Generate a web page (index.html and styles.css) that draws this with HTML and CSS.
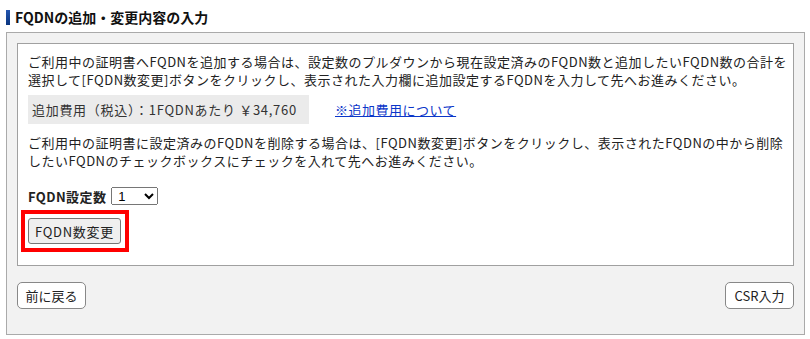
FILE: index.html
```html
<html>
    <head>
        <meta http-equiv="Content-Type" content="text/html; charset=utf-8" />
        <title>FQDNの追加・変更内容の入力</title>
        <link rel="stylesheet" href="styles.css">
    </head>
    <body>
        <h2 class="ttl">FQDNの追加・変更内容の入力</h2>
        <div class="panel">
            <div class="box">
                <p class="txt">ご利用中の証明書へFQDNを追加する場合は、設定数のプルダウンから現在設定済みのFQDN数と追加したいFQDN数の合計を<br />選択して[FQDN数変更]ボタンをクリックし、表示された入力欄に追加設定するFQDNを入力して先へお進みください。</p>
                <div class="fee">
                    <span class="fee-label">追加費用（税込）：1FQDNあたり ￥34,760</span>
                    <a class="fee-link" href="#">※追加費用について</a>
                </div>
                <p class="txt txt2">ご利用中の証明書に設定済みのFQDNを削除する場合は、[FQDN数変更]ボタンをクリックし、表示されたFQDNの中から削除<br />したいFQDNのチェックボックスにチェックを入れて先へお進みください。</p>
                <div class="count">
                    <label class="count-label">FQDN設定数</label>
                    <select class="count-sel"><option>1</option><option>2</option><option>3</option></select>
                </div>
                <div class="mark">
                    <button class="btn-change" type="button">FQDN数変更</button>
                </div>
            </div>
            <div class="nav">
                <button class="btn-nav" type="button">前に戻る</button>
                <button class="btn-nav" type="button">CSR入力</button>
            </div>
        </div>
    </body>
</html>
```

FILE: styles.css
```css
body {
    margin: 0;
    background-color: #fff;
    color: #222;
    font-family: "Noto Sans CJK JP", "Noto Sans", sans-serif;
    font-size: 13px;
}

.ttl {
    display: flex;
    align-items: center;
    margin: 0;
    padding: 8px 0 6px 6px;
    font-size: 14px;
    line-height: 18px;
    font-weight: bold;
    color: #111;
}

.ttl:before {
    content: "";
    display: inline-block;
    width: 4px;
    height: 15px;
    margin-right: 5px;
    background: linear-gradient(#2456b0, #0a357f);
}

.panel {
    width: 799px;
    box-sizing: border-box;
    margin-left: 6px;
    padding: 10px 10px 25px 10px;
    background-color: #f2f2f2;
    border: 1px solid #aaaaaa;
}

.box {
    background-color: #fff;
    border: 1px solid #a0a0a0;
    padding: 9px 10px 13px 10px;
    letter-spacing: 0.5px;
}

.txt {
    margin: 0;
    line-height: 18px;
    white-space: nowrap;
}

.txt2 {
    margin-top: 10px;
}

.fee {
    display: flex;
    align-items: center;
    margin-top: 6px;
}

.fee-label {
    display: inline-block;
    width: 281px;
    box-sizing: border-box;
    height: 29px;
    line-height: 18px;
    padding: 6px 0 5px 4px;
    background-color: #ebebeb;
    color: #333;
    letter-spacing: 0.7px;
    white-space: nowrap;
}

.fee-link {
    margin-left: 26px;
    color: #0b36c9;
    text-decoration: underline;
}

.count {
    display: flex;
    align-items: center;
    height: 20px;
    margin-top: 16px;
}

.count-label {
    font-weight: bold;
    margin-right: 5px;
    letter-spacing: 0.4px;
}

.count-sel {
    width: 47px;
    height: 18px;
    font-size: 13px;
    font-family: "Liberation Sans", sans-serif;
    padding: 0 0 0 2px;
}

.mark {
    display: inline-block;
    margin: 4px 0 0 -7px;
    padding: 4px 4px 4px 3px;
    border: 4px solid #ff0000;
}

.btn-change {
    display: block;
    width: 93px;
    height: 26px;
    padding: 0;
    font-family: "Noto Sans CJK JP", "Noto Sans", sans-serif;
    font-size: 13px;
    letter-spacing: 0.7px;
    color: #222;
    background-color: #efefef;
    border: 1px solid #767676;
    border-radius: 3px;
}

.nav {
    display: flex;
    justify-content: space-between;
    margin-top: 16px;
}

.btn-nav {
    width: 69px;
    height: 27px;
    padding: 0;
    font-family: "Noto Sans CJK JP", "Noto Sans", sans-serif;
    font-size: 13px;
    color: #222;
    background-color: #fff;
    border: 1px solid #888;
    border-radius: 5px;
}
```
